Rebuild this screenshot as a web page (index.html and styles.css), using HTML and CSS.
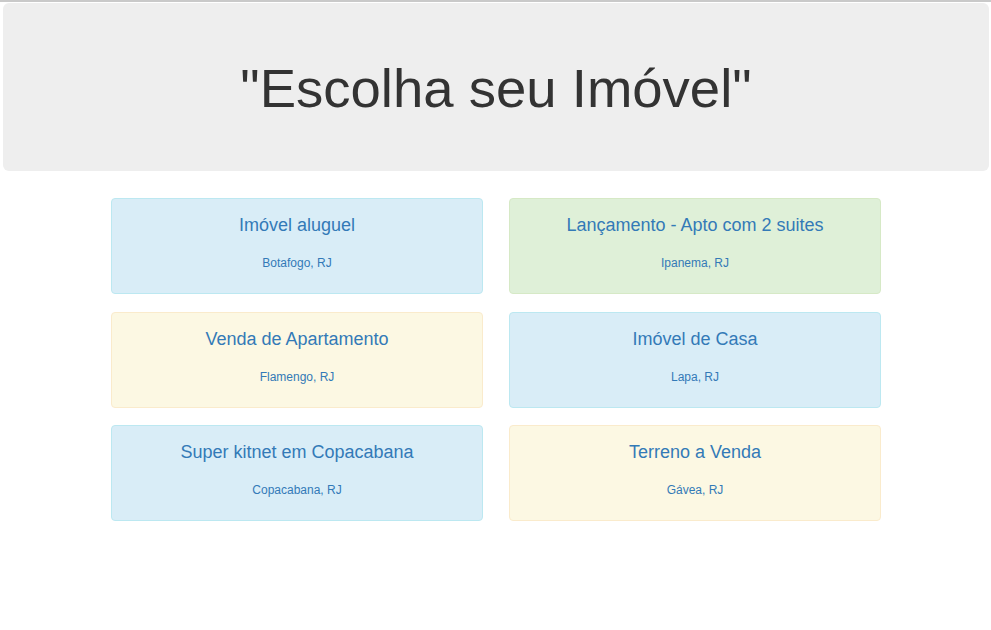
FILE: index.html
```html
<!DOCTYPE html>
<html lang="pt">
<head>
<meta charset="utf-8">
<title>Escolha seu Imóvel</title>
<link rel="stylesheet" href="styles.css">
</head>
<body>
<div class="topline"></div>
<header class="jumbotron">
  <h1>"Escolha seu Imóvel"</h1>
</header>
<main class="grid">
  <a class="card info" href="#"><h2>Imóvel aluguel</h2><p>Botafogo, RJ</p></a>
  <a class="card success" href="#"><h2>Lançamento - Apto com 2 suites</h2><p>Ipanema, RJ</p></a>
  <a class="card warning" href="#"><h2>Venda de Apartamento</h2><p>Flamengo, RJ</p></a>
  <a class="card info" href="#"><h2>Imóvel de Casa</h2><p>Lapa, RJ</p></a>
  <a class="card info" href="#"><h2>Super kitnet em Copacabana</h2><p>Copacabana, RJ</p></a>
  <a class="card warning" href="#"><h2>Terreno a Venda</h2><p>Gávea, RJ</p></a>
</main>
</body>
</html>
```
FILE: styles.css
```css
html, body {
  margin: 0;
  padding: 0;
  background: #fff;
  font-family: "Liberation Sans", Arial, sans-serif;
  color: #333;
}
.topline {
  height: 2px;
  background: #c9c9c9;
}
.jumbotron {
  margin: 1px 2px 0 3px;
  height: 168px;
  background: #eeeeee;
  border-radius: 6px;
  display: flex;
  align-items: center;
  justify-content: center;
}
.jumbotron h1 {
  margin: 0;
  font-size: 54.5px;
  font-weight: 400;
  color: #333;
  padding-top: 2px;
}
.grid {
  width: 770px;
  margin: 27px 0 0 111px;
  display: grid;
  grid-template-columns: 372px 372px;
  column-gap: 26px;
  row-gap: 17.5px;
}
.card {
  display: block;
  height: 94px;
  border: 1px solid transparent;
  border-radius: 4px;
  text-align: center;
  text-decoration: none;
  color: #337ab7;
  box-sizing: content-box;
}
.card h2 {
  margin: 15px 0 0;
  font-size: 18px;
  font-weight: 400;
  line-height: 22px;
}
.card p {
  margin: 20px 0 0;
  font-size: 12px;
  line-height: 14px;
}
.info { background: #d9edf7; border-color: #bce8f1; }
.success { background: #dff0d8; border-color: #d6e9c6; }
.warning { background: #fcf8e3; border-color: #faebcc; }
```
